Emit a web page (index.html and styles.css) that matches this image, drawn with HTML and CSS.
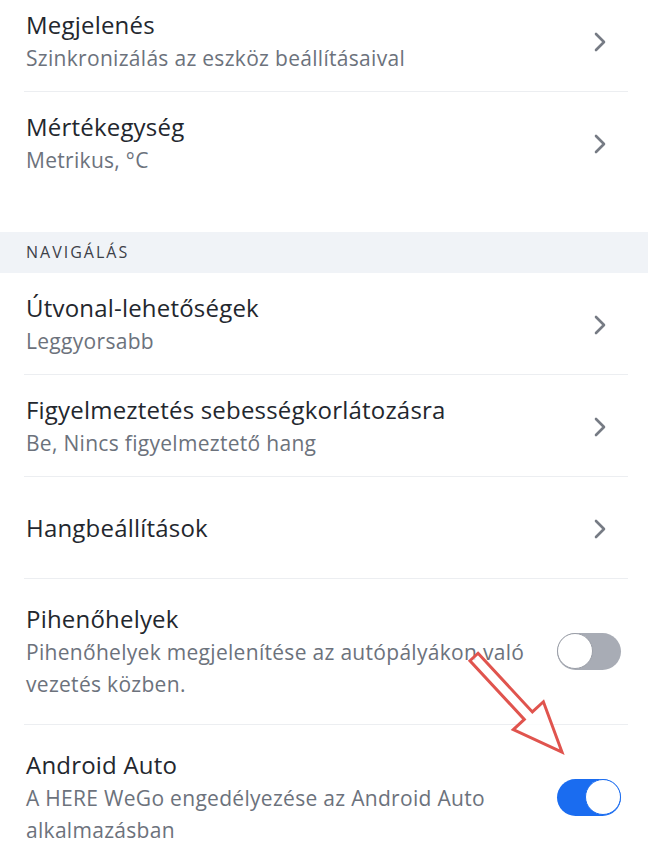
FILE: index.html
```html
<!DOCTYPE html>
<html lang="hu">
<head>
    <meta charset="UTF-8">
    <meta name="viewport" content="width=device-width, initial-scale=1.0">
    <title>Beállítások</title>
    <link rel="stylesheet" href="styles.css">
</head>
<body>
    <div class="screen">
        <ul class="settings first">
            <li class="row">
                <div class="row-text">
                    <div class="title">Megjelenés</div>
                    <div class="sub">Szinkronizálás az eszköz beállításaival</div>
                </div>
                <svg class="chev" viewBox="0 0 12 20"><path d="M2 2 L10 10 L2 18"/></svg>
            </li>
            <li class="row">
                <div class="row-text">
                    <div class="title">Mértékegység</div>
                    <div class="sub">Metrikus, °C</div>
                </div>
                <svg class="chev" viewBox="0 0 12 20"><path d="M2 2 L10 10 L2 18"/></svg>
            </li>
        </ul>

        <div class="section-title">NAVIGÁLÁS</div>

        <ul class="settings">
            <li class="row">
                <div class="row-text">
                    <div class="title">Útvonal-lehetőségek</div>
                    <div class="sub">Leggyorsabb</div>
                </div>
                <svg class="chev" viewBox="0 0 12 20"><path d="M2 2 L10 10 L2 18"/></svg>
            </li>
            <li class="row">
                <div class="row-text">
                    <div class="title">Figyelmeztetés sebességkorlátozásra</div>
                    <div class="sub">Be, Nincs figyelmeztető hang</div>
                </div>
                <svg class="chev" viewBox="0 0 12 20"><path d="M2 2 L10 10 L2 18"/></svg>
            </li>
            <li class="row">
                <div class="row-text">
                    <div class="title">Hangbeállítások</div>
                </div>
                <svg class="chev" viewBox="0 0 12 20"><path d="M2 2 L10 10 L2 18"/></svg>
            </li>
            <li class="row toggle-row">
                <div class="row-text">
                    <div class="title">Pihenőhelyek</div>
                    <div class="sub">Pihenőhelyek megjelenítése az autópályákon való vezetés közben.</div>
                </div>
                <div class="switch"><span class="knob"></span></div>
            </li>
            <li class="row toggle-row">
                <div class="row-text">
                    <div class="title">Android Auto</div>
                    <div class="sub">A HERE WeGo engedélyezése az Android Auto alkalmazásban</div>
                </div>
                <div class="switch on"><span class="knob"></span></div>
            </li>
        </ul>

        <!-- annotation arrow drawn over the screenshot -->
        <svg class="arrow" viewBox="0 0 648 860">
            <polygon transform="translate(474 657) rotate(47.2)"
                     points="0,-5.5 80,-5.5 80,-20.5 129.5,0 80,20.5 80,5.5 0,5.5"/>
        </svg>
    </div>
</body>
</html>
```

FILE: styles.css
```css
body {
    margin: 0;
    padding: 0;
    background-color: #ffffff;
    font-family: 'Open Sans', 'Noto Sans', sans-serif;
    overflow: hidden;
}

.screen {
    position: relative;
    width: 648px;
    height: 860px;
    overflow: hidden;
}

.settings {
    list-style: none;
    margin: 0;
    padding: 0;
}

.settings.first {
    margin-top: -10px;
    margin-bottom: 39px;
}

.row {
    display: flex;
    align-items: center;
    margin: 0 20px 0 24px;
    padding: 19px 0 17px 2px;
    border-bottom: 1px solid #eceef1;
}

.row:last-child {
    border-bottom: none;
}

.toggle-row {
    padding-top: 24px;
    padding-bottom: 24px;
}

.row-text {
    flex: 1;
    min-height: 65px;
    display: flex;
    flex-direction: column;
    justify-content: center;
}

.title {
    font-size: 24px;
    line-height: 32px;
    letter-spacing: 0.2px;
    color: #23272e;
    margin-bottom: 1px;
}

.sub {
    font-size: 21px;
    line-height: 32px;
    letter-spacing: 0.3px;
    color: #6c727c;
    max-width: 515px;
}

.chev {
    width: 12px;
    height: 20px;
    margin-right: 22px;
    flex-shrink: 0;
}

.chev path {
    fill: none;
    stroke: #767b84;
    stroke-width: 2.6;
    stroke-linecap: round;
    stroke-linejoin: round;
}

.switch {
    position: relative;
    flex-shrink: 0;
    width: 64px;
    height: 37px;
    border-radius: 19px;
    background-color: #a8acb5;
    margin-right: 7px;
    margin-left: 16px;
}

.knob {
    position: absolute;
    top: 0;
    left: 0;
    width: 34px;
    height: 34px;
    border-radius: 50%;
    background-color: #ffffff;
    border: 1.5px solid #9a9ea7;
}

.switch.on {
    background-color: #1a6cf0;
}

.switch.on .knob {
    left: auto;
    right: 0;
    border-color: #1a6cf0;
}

.section-title {
    background-color: #f0f3f7;
    height: 41px;
    line-height: 41px;
    padding-left: 26px;
    font-size: 16px;
    letter-spacing: 2px;
    color: #3c4048;
}

.arrow {
    position: absolute;
    top: 0;
    left: 0;
    width: 648px;
    height: 860px;
    pointer-events: none;
}

.arrow polygon {
    fill: rgba(255, 255, 255, 0.8);
    stroke: #e0544e;
    stroke-width: 3;
    stroke-linejoin: miter;
}
```
